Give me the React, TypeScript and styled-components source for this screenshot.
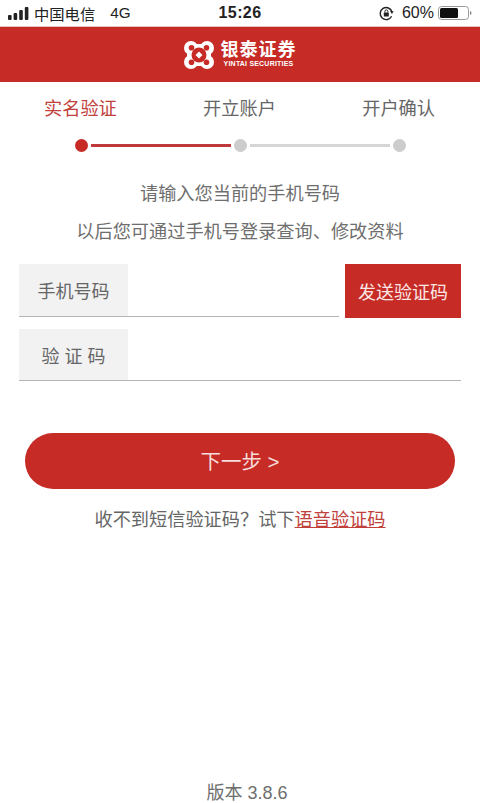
import React from "react";
import styled, { createGlobalStyle } from "styled-components";

const GlobalStyle = createGlobalStyle`
  html, body { margin: 0; padding: 0; background: #fff; }
  body { font-family: "Liberation Sans", "Noto Sans CJK SC", sans-serif; }
  * { box-sizing: border-box; }
`;

const Page = styled.div`
  width: 480px;
  height: 803px;
  display: flex;
  flex-direction: column;
  overflow: hidden;
  background: #fff;
`;

const StatusBar = styled.div`
  height: 26px;
  padding: 0 8px 0 8px;
  display: grid;
  grid-template-columns: 1fr auto 1fr;
  align-items: center;
  font-size: 15.3px;
  color: #222;
`;

const StatusLeft = styled.div`
  display: flex;
  align-items: center;
  gap: 5px;
`;

const Carrier = styled.span`
  margin-right: 10px;
`;

const Clock = styled.div`
  font-weight: 700;
  font-size: 16px;
  letter-spacing: 0.4px;
`;

const StatusRight = styled.div`
  display: flex;
  align-items: center;
  justify-content: flex-end;
  gap: 4px;
`;

const Percent = styled.span`
  font-size: 16px;
  margin-left: 4px;
`;

const Header = styled.header`
  height: 56px;
  background: #c62b26;
  display: flex;
  align-items: center;
  justify-content: center;
  gap: 7px;
  border-top: 1px solid #e6c4c2;
`;

const Brand = styled.div`
  display: flex;
  flex-direction: column;
  align-items: center;
  color: #fff;
`;

const BrandName = styled.div`
  font-size: 18px;
  line-height: 19px;
  font-weight: 700;
  letter-spacing: 1px;
`;

const BrandSub = styled.div`
  font-size: 7px;
  line-height: 8px;
  font-weight: 700;
  letter-spacing: 0.2px;
  white-space: nowrap;
`;

const Steps = styled.div`
  padding: 16px 45px 0 44px;
  display: flex;
  justify-content: space-between;
`;

const StepLabel = styled.div<{ $active?: boolean }>`
  font-size: 18.2px;
  line-height: 22px;
  color: ${(p) => (p.$active ? "#c0403c" : "#666")};
`;

const Track = styled.div`
  margin: 19px 74px 0 75px;
  display: flex;
  align-items: center;
  gap: 3px;
`;

const Dot = styled.div<{ $done?: boolean }>`
  width: 13px;
  height: 13px;
  border-radius: 50%;
  flex: none;
  background: ${(p) => (p.$done ? "#c62b26" : "#cdcdcd")};
`;

const Line = styled.div<{ $done?: boolean }>`
  flex: 1;
  height: 3px;
  background: ${(p) => (p.$done ? "#c0393a" : "#d6d6d6")};
`;

const Hint = styled.p<{ $gap: number }>`
  margin: ${(p) => p.$gap}px 0 0;
  text-align: center;
  font-size: 18.2px;
  line-height: 22px;
  color: #6e6e6e;
`;

const Form = styled.div`
  margin-top: 21px;
  padding: 0 19px;
  display: flex;
  flex-direction: column;
  gap: 11px;
`;

const FieldRow = styled.div`
  display: flex;
  gap: 6px;
`;

const Field = styled.label<{ $height: number }>`
  flex: 1 0 auto;
  height: ${(p) => p.$height}px;
  display: flex;
  border-bottom: 1px solid #b4b4b4;
`;

const FieldName = styled.span`
  width: 109px;
  background: #f2f2f2;
  display: flex;
  align-items: center;
  justify-content: center;
  font-size: 18px;
  color: #666;
  white-space: pre;
`;

const FieldInput = styled.input`
  flex: 1;
  width: 100px;
  min-width: 0;
  border: 0;
  outline: 0;
  background: transparent;
`;

const SendButton = styled.button`
  width: 116px;
  height: 54px;
  border: 0;
  padding: 0;
  background: #c62b26;
  color: #fbe6e4;
  font: inherit;
  font-size: 18px;
`;

const NextButton = styled.button`
  margin: 52px 25px 0 25px;
  height: 56px;
  flex: none;
  border: 0;
  padding: 0 0 3px;
  border-radius: 28px;
  background: #c62b26;
  color: #f6dcda;
  font: inherit;
  font-size: 20.5px;
`;

const VoiceHint = styled.p`
  margin: 20px 0 0;
  text-align: center;
  font-size: 18.2px;
  line-height: 22px;
  color: #666;
`;

const VoiceLink = styled.a`
  color: #c0403c;
  text-decoration: underline;
`;

const Version = styled.div`
  margin-top: auto;
  padding-left: 14px;
  height: 19px;
  text-align: center;
  font-size: 18px;
  line-height: 18px;
  color: #6e6e6e;
`;

const SignalBars = () => (
  <svg width="21" height="13" viewBox="0 0 21 13">
    <rect x="0" y="8" width="3.6" height="5" rx="1" fill="#222" />
    <rect x="5.6" y="6" width="3.6" height="7" rx="1" fill="#222" />
    <rect x="11.2" y="3" width="3.6" height="10" rx="1" fill="#222" />
    <rect x="16.8" y="0" width="3.6" height="13" rx="1" fill="#222" />
  </svg>
);

const RotationLock = () => (
  <svg width="15" height="15" viewBox="0 0 15 15">
    <path d="M12.6 10.2A6 6 0 1 1 13 6" fill="none" stroke="#222" strokeWidth="1.4" />
    <path d="M11 5.2h3.6L13 8z" fill="#222" />
    <rect x="4.800" y="6.600" width="5" height="4" rx="0.6" fill="#222" />
    <path d="M5.900 6.600V5.400a1.500 1.500 0 0 1 3 0v1.200" fill="none" stroke="#222" strokeWidth="1" />
  </svg>
);

const Battery = () => (
  <svg width="34" height="14" viewBox="0 0 34 14">
    <rect x="0.5" y="0.5" width="30" height="13" rx="3" fill="none" stroke="#999" />
    <rect x="2" y="2" width="18" height="10" rx="1.5" fill="#111" />
    <path d="M32 5c.9.3 1.500 1.100 1.500 2s-.6 1.700-1.500 2z" fill="#888" />
  </svg>
);

const Logo = () => (
  <svg width="30" height="28" viewBox="0 0 30 28">
    <g fill="#fff">
      <circle cx="7" cy="7" r="7" />
      <circle cx="23" cy="7" r="7" />
      <circle cx="7" cy="21" r="7" />
      <circle cx="23" cy="21" r="7" />
      <rect x="6" y="3" width="18" height="22" />
      <rect x="3" y="6" width="24" height="16" />
    </g>
    <g fill="#c62b26">
      <circle cx="15" cy="14" r="7.500" />
      <circle cx="7.500" cy="6.800" r="2.800" />
      <circle cx="22.500" cy="6.800" r="2.800" />
      <circle cx="7.500" cy="21.200" r="2.800" />
      <circle cx="22.500" cy="21.200" r="2.800" />
    </g>
    <path fill="#fff" d="M15 10.500l3.500 3.500-3.500 3.500-3.500-3.500z" />
  </svg>
);

export default function App() {
  return (
    <Page>
      <GlobalStyle />
      <StatusBar>
        <StatusLeft>
          <SignalBars />
          <Carrier>中国电信</Carrier>
          <span>4G</span>
        </StatusLeft>
        <Clock>15:26</Clock>
        <StatusRight>
          <RotationLock />
          <Percent>60%</Percent>
          <Battery />
        </StatusRight>
      </StatusBar>
      <Header>
        <Logo />
        <Brand>
          <BrandName>银泰证券</BrandName>
          <BrandSub>YINTAI SECURITIES</BrandSub>
        </Brand>
      </Header>
      <Steps>
        <StepLabel $active>实名验证</StepLabel>
        <StepLabel>开立账户</StepLabel>
        <StepLabel>开户确认</StepLabel>
      </Steps>
      <Track>
        <Dot $done />
        <Line $done />
        <Dot />
        <Line />
        <Dot />
      </Track>
      <Hint $gap={31}>请输入您当前的手机号码</Hint>
      <Hint $gap={16}>以后您可通过手机号登录查询、修改资料</Hint>
      <Form>
        <FieldRow>
          <Field $height={53}>
            <FieldName>手机号码</FieldName>
            <FieldInput />
          </Field>
          <SendButton>发送验证码</SendButton>
        </FieldRow>
        <Field $height={52}>
          <FieldName>验 证 码</FieldName>
          <FieldInput />
        </Field>
      </Form>
      <NextButton>下一步 &gt;</NextButton>
      <VoiceHint>
        收不到短信验证码？试下<VoiceLink>语音验证码</VoiceLink>
      </VoiceHint>
      <Version>版本 3.8.6</Version>
    </Page>
  );
}
